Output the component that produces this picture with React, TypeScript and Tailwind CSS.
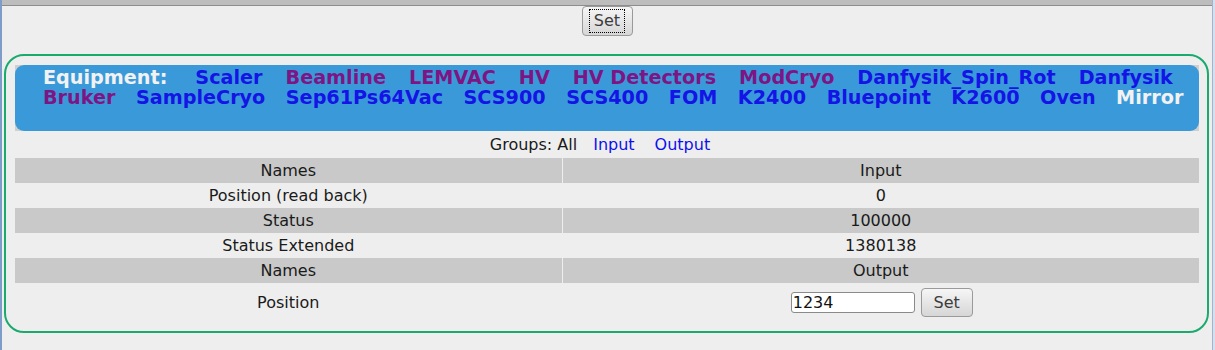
import React from 'react';

type Item = { label: string; kind: 'link' | 'visited' | 'current' };

const lineOne: Item[] = [
  { label: 'Scaler', kind: 'link' },
  { label: 'Beamline', kind: 'visited' },
  { label: 'LEMVAC', kind: 'visited' },
  { label: 'HV', kind: 'visited' },
  { label: 'HV Detectors', kind: 'visited' },
  { label: 'ModCryo', kind: 'visited' },
  { label: 'Danfysik_Spin_Rot', kind: 'link' },
  { label: 'Danfysik', kind: 'link' },
];

const lineTwo: Item[] = [
  { label: 'Bruker', kind: 'visited' },
  { label: 'SampleCryo', kind: 'link' },
  { label: 'Sep61Ps64Vac', kind: 'link' },
  { label: 'SCS900', kind: 'link' },
  { label: 'SCS400', kind: 'link' },
  { label: 'FOM', kind: 'link' },
  { label: 'K2400', kind: 'link' },
  { label: 'Bluepoint', kind: 'link' },
  { label: 'K2600', kind: 'link' },
  { label: 'Oven', kind: 'link' },
  { label: 'Mirror', kind: 'current' },
];

const colour = (kind: Item['kind']) =>
  kind === 'link' ? 'text-[#1414e6]' : kind === 'visited' ? 'text-[#7e1585]' : 'text-[#f2f2f2]';

const rows = [
  { name: 'Names', value: 'Input', head: true },
  { name: 'Position (read back)', value: '0' },
  { name: 'Status', value: '100000', head: true },
  { name: 'Status Extended', value: '1380138' },
  { name: 'Names', value: 'Output', head: true },
];

const EquipLink = ({ item }: { item: Item }) => (
  <span className={`${colour(item.kind)} whitespace-pre cursor-pointer`}>{item.label}</span>
);

const SetButton = ({ focused }: { focused?: boolean }) => (
  <button className="h-[30px] w-[51px] flex items-center justify-center rounded-[4px] border border-[#9a9a9a] bg-gradient-to-b from-[#f6f6f6] to-[#d6d6d6] text-[16px] text-[#3c3c3c]">
    <span className={focused ? 'px-[4px] leading-[22px] outline outline-1 outline-dotted outline-black' : ''}>Set</span>
  </button>
);

export default function App() {
  return (
    <div className="flex w-full min-h-[350px] bg-[#eeeeee] font-['DejaVu_Sans',sans-serif] text-[16px] text-[#1a1a1a]">
      <div className="w-[2px] bg-[#7d9cc9]" />

      <div className="flex-1 flex flex-col">
        <div className="h-[6px] bg-[#bdbdbd] border-b border-[#8d8d8d]" />

        <div className="flex justify-center">
          <SetButton focused />
        </div>

        <div className="mt-[18px] ml-[2px] mr-[3px] border-2 border-[#19aa6e] rounded-[20px] pt-[9px] pl-[9px] pr-[8px] pb-[9px]">
          {/* equipment menu */}
          <div className="bg-[#cfcfcf]">
            <div className="h-[66px] rounded-[9px] bg-[#3a9ad9] pl-[28px] pt-[3px] text-[19.2px] font-bold leading-[20px]">
              <div className="flex gap-x-[23px]">
                <span className="text-[#f2f2f2] mr-[5px]">Equipment:</span>
                {lineOne.map((item, i) => (
                  <EquipLink key={i} item={item} />
                ))}
              </div>
              <div className="flex gap-x-[20.5px]">
                {lineTwo.map((item, i) => (
                  <EquipLink key={i} item={item} />
                ))}
              </div>
            </div>
          </div>

          <div className="h-[27px] flex items-center justify-center pr-[14px]">
            <span>Groups: All</span>
            <span className="ml-[16px] text-[#1010ee]">Input</span>
            <span className="ml-[20px] text-[#1010ee]">Output</span>
          </div>

          <table className="w-full">
            <tbody>
              {rows.map((r, i) => (
                <tr key={i} className={`h-[25px] ${r.head ? 'bg-[#c9c9c9]' : ''}`}>
                  <td className="w-[547px] text-center border-r border-[#eeeeee] p-0">{r.name}</td>
                  <td className="text-center p-0">{r.value}</td>
                </tr>
              ))}
              <tr className="h-[39px]">
                <td className="text-center border-r border-[#eeeeee] p-0">Position</td>
                <td className="p-0">
                  <div className="flex items-center justify-center gap-x-[6px] pl-[2px]">
                    <input
                      defaultValue="1234"
                      className="h-[21px] w-[124px] rounded-[3px] border border-[#8a8a8a] bg-white px-[1px] text-[16px] text-[#111] outline-none"
                    />
                    <button className="h-[29px] w-[52px] rounded-[4px] border border-[#9a9a9a] bg-gradient-to-b from-[#f6f6f6] to-[#d6d6d6] text-[16px] text-[#3c3c3c]">
                      Set
                    </button>
                  </div>
                </td>
              </tr>
            </tbody>
          </table>
        </div>
      </div>

      <div className="w-[3px] bg-[#d6dfeb] border-l border-[#9fb3d3]" />
    </div>
  );
}
